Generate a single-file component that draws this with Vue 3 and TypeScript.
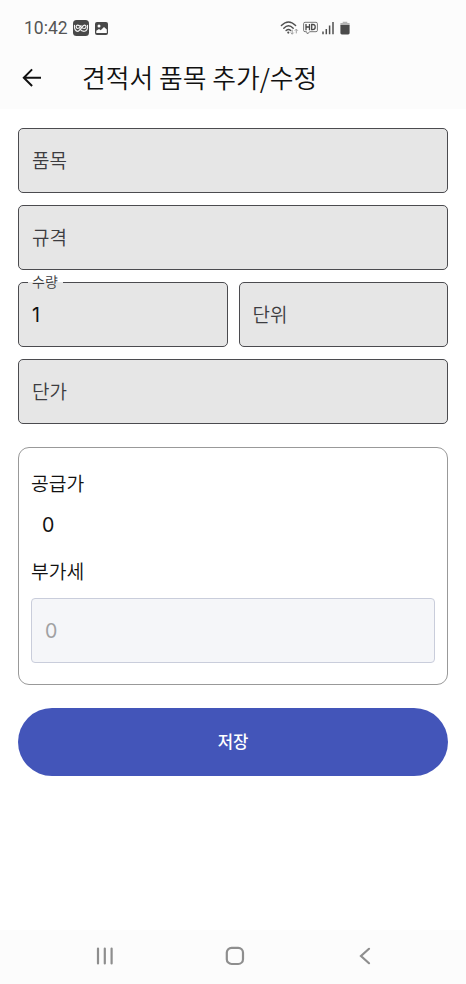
<script setup lang="ts">
import { ref } from 'vue'

const quantity = ref('1')
const supplyPrice = ref(0)
const vat = ref(0)
</script>

<template>
  <div class="screen">
    <header class="top">
      <div class="status">
        <span class="time">10:42</span>
        <svg class="app-icon" width="16" height="16" viewBox="0 0 16 16">
          <rect width="16" height="16" rx="3.5" fill="#484848" />
          <path d="M1.5 5.4C1.2 8.8 2.5 11.3 4.7 11.3C7.4 11.3 9 5.1 11.5 5.1C13.5 5.1 13.5 8.5 11.2 8.5C8.8 8.5 7.2 5.1 4.7 5.1C2.6 5.1 2.7 8.5 4.9 8.5C6.7 8.5 7.6 6.3 8 5.5M6.8 9C8.2 10.8 9.8 11.4 11.4 11.3C13.8 11.1 14.8 8.7 14.5 5.4" fill="none" stroke="#f4f4f4" stroke-width="1.15" stroke-linecap="round" />
        </svg>
        <svg class="photo-icon" width="13" height="13" viewBox="0 0 13 13">
          <rect width="13" height="13" rx="2" fill="#484848" />
          <circle cx="4" cy="4" r="1.5" fill="#fcfcfc" />
          <path d="M1.3 11V8.7L4 7L5.7 8.3L9 5L11.8 7.6V11Z" fill="#fcfcfc" />
        </svg>
        <svg class="system-icons" width="72" height="18" viewBox="0 0 72 18">
          <g fill="none" stroke="#505050" stroke-width="1.4" stroke-linecap="round">
            <path d="M1.4 6.6Q8.5 -.5 15.6 6.6M3.8 9.2Q8.5 4.4 13.2 9.2M6.1 11.5Q8.5 9.3 10.7 11.5" />
          </g>
          <circle cx="8.3" cy="13.6" r="1.1" fill="#505050" />
          <path d="M12.2 10.7V15.2M10.7 13.6L12.2 15.2L13.7 13.6M16.3 14.4V10.2M14.8 11.7L16.3 10.1L17.8 11.7" fill="none" stroke="#a0a0a0" stroke-width="1" />
          <path d="M25 3.3H36Q37.4 3.3 37.4 4.7V11.3Q37.4 12.7 36 12.7H29.6L27.5 15L26.5 12.7H25Q23.6 12.7 23.6 11.3V4.7Q23.6 3.3 25 3.3Z" fill="none" stroke="#777" stroke-width="1" />
          <path d="M26 4.9V11.2M29.5 4.9V11.2M26 8H29.5M31.7 5.5V10.6H32.6Q35.2 10.6 35.2 8T32.6 5.5Z" fill="none" stroke="#484848" stroke-width="1.3" />
          <path d="M43 12.4V15.2M46.3 10V15.2M49.6 6.6V15.2M53 3V15.2" stroke="#505050" stroke-width="1.5" />
          <path d="M62.7 2.8H67.3V4.1H69.6V6.2H60.4V4.1H62.7Z" fill="#b5b5b5" />
          <path d="M60.4 6H69.6V14Q69.6 15.4 68.2 15.4H61.8Q60.4 15.4 60.4 14Z" fill="#4b4b4b" />
        </svg>
      </div>
      <div class="app-bar">
        <button class="back" type="button" aria-label="뒤로">
          <svg width="20" height="20" viewBox="0 0 20 20" fill="none" stroke="#111" stroke-width="2">
            <path d="M19 9.7H2.3M10.1 1.4L1.8 9.7L10.1 18" />
          </svg>
        </button>
        <h1>견적서 품목 추가/수정</h1>
      </div>
    </header>

    <main>
      <div class="fields">
        <div class="field wide">품목</div>
        <div class="field wide">규격</div>
        <div class="field filled">
          <span class="float-label">수량</span>
          <span class="number">{{ quantity }}</span>
        </div>
        <div class="field">단위</div>
        <div class="field wide">단가</div>
      </div>

      <section class="card">
        <div class="caption">공급가</div>
        <div class="amount number">{{ supplyPrice }}</div>
        <div class="caption">부가세</div>
        <div class="vat number">{{ vat }}</div>
      </section>

      <button class="save" type="button">저장</button>
    </main>

    <nav class="nav">
      <svg width="20" height="20" viewBox="0 0 20 20" stroke="#8e8e8e" stroke-width="2.2" stroke-linecap="round">
        <path d="M3 2.5V17.5M9.8 2.5V17.5M16.6 2.5V17.5" />
      </svg>
      <svg width="20" height="20" viewBox="0 0 20 20" fill="none" stroke="#8e8e8e" stroke-width="2.2">
        <rect x="1.8" y="1.8" width="16.2" height="16.2" rx="4.8" />
      </svg>
      <svg width="20" height="20" viewBox="0 0 20 20" fill="none" stroke="#8e8e8e" stroke-width="2.2" stroke-linecap="round">
        <path d="M14 2.8L6 10L14 17.2" />
      </svg>
    </nav>
  </div>
</template>

<style>
body {
  background: #fff;
}
</style>

<style scoped>
.screen {
  display: flex;
  flex-direction: column;
  height: 984px;
  box-sizing: border-box;
  font-family: "Noto Sans CJK KR", sans-serif;
  font-weight: 350;
  color: #111;
}
button {
  border: 0;
  padding: 0;
  font-family: inherit;
}
svg {
  display: block;
  flex: none;
}
.top {
  height: 109px;
  background: #fcfcfc;
}
.status {
  display: flex;
  align-items: center;
  height: 47px;
  padding: 9px 114px 0 24px;
  box-sizing: border-box;
}
.time {
  width: 49px;
  font: 17.5px/20px Roboto, sans-serif;
  color: #555;
}
.photo-icon {
  margin-left: 6px;
}
.system-icons {
  margin-left: auto;
}
.app-bar {
  display: flex;
  align-items: center;
  height: 62px;
  padding-left: 22px;
}
.back {
  background: none;
  margin-right: 40px;
}
h1 {
  margin: 0;
  padding-bottom: 2px;
  font-size: 25.8px;
  line-height: 38px;
  font-weight: 350;
}
main {
  flex: 1;
  padding: 19px 18px 0;
}
.fields {
  display: grid;
  grid-template-columns: 1fr 1fr;
  gap: 12px 11px;
}
.field {
  position: relative;
  display: flex;
  align-items: center;
  height: 65px;
  box-sizing: border-box;
  padding: 0 13px 2px;
  border: 1px solid #4b4b4f;
  border-radius: 5px;
  background: #e6e6e6;
  color: #3c3c40;
  font-size: 19px;
}
.wide {
  grid-column: span 2;
}
.filled {
  color: #111;
}
.number {
  font-family: Inter, sans-serif;
  font-size: 19.6px;
  font-weight: 400;
}
.filled .number {
  padding-top: 2px;
}
.float-label {
  position: absolute;
  left: 9px;
  top: -12px;
  padding: 0 5px 0 4px;
  font-size: 14px;
  line-height: 20px;
  color: #3c3c40;
  background: linear-gradient(#fff 0 11px, #e6e6e6 11px);
}
.card {
  height: 238px;
  box-sizing: border-box;
  margin-top: 23px;
  padding: 21px 12px 0;
  border: 1px solid #999;
  border-radius: 11px;
}
.caption {
  font-size: 19.3px;
  line-height: 28px;
}
.amount {
  height: 60px;
  line-height: 56px;
  padding-left: 11px;
}
.vat {
  height: 65px;
  line-height: 64px;
  box-sizing: border-box;
  margin-top: 13px;
  padding-left: 13px;
  border: 1px solid #c9cddb;
  border-radius: 4px;
  background: #f5f6f9;
  color: #a0a1a3;
}
.save {
  display: block;
  width: 100%;
  height: 68px;
  margin-top: 22.5px;
  padding-bottom: 2px;
  border-radius: 34px;
  background: #4355b9;
  color: #fff;
  font-size: 16.7px;
  font-weight: 500;
}
.nav {
  display: flex;
  justify-content: space-between;
  align-items: center;
  height: 54px;
  padding: 0 91px 2px 95px;
  box-sizing: border-box;
  background: #fcfcfc;
}
</style>
